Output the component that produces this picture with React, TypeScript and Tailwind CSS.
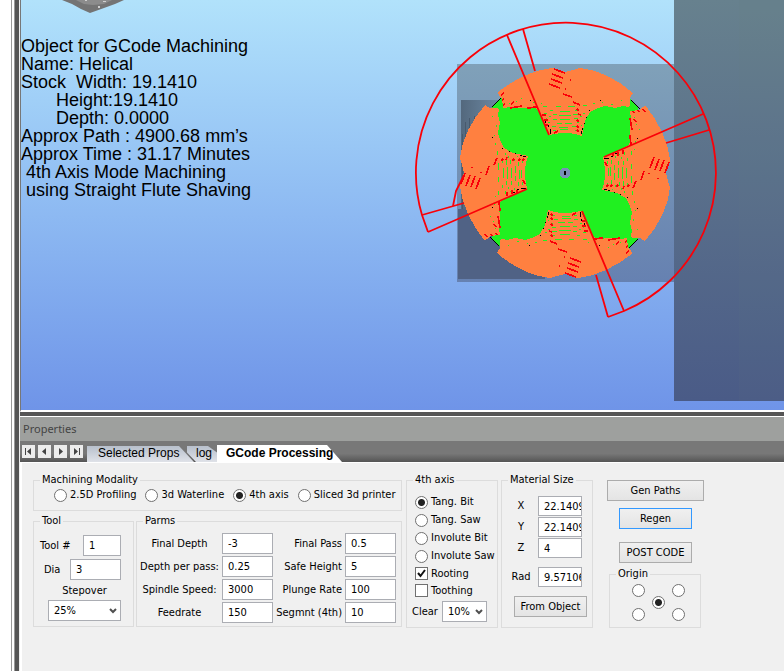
import type { ReactNode } from 'react'

const INFO_LINES = [
  'Object for GCode Machining',
  'Name: Helical',
  'Stock  Width: 19.1410',
  '       Height:19.1410',
  '       Depth: 0.0000',
  'Approx Path : 4900.68 mm’s',
  'Approx Time : 31.17 Minutes',
  ' 4th Axis Mode Machining',
  ' using Straight Flute Shaving',
]

const MODALITIES = ['2.5D Profiling', '3d Waterline', '4th axis', 'Sliced 3d printer']
const AXIS_MODES = ['Tang. Bit', 'Tang. Saw', 'Involute Bit', 'Involute Saw']

const PARMS = [
  ['Final Depth', '-3', 'Final Pass', '0.5'],
  ['Depth per pass:', '0.25', 'Safe Height', '5'],
  ['Spindle Speed:', '3000', 'Plunge Rate', '100'],
  ['Feedrate', '150', 'Segmnt (4th)', '10'],
]

const NAV_ICONS = [
  { label: 'First tab', d: 'M3 3h1v7h-1z M9 3v7l-4-3.500z' },
  { label: 'Previous tab', d: 'M8 3v7l-4-3.500z' },
  { label: 'Next tab', d: 'M5 3v7l4-3.500z' },
  { label: 'Last tab', d: 'M4 3v7l4-3.500z M9 3h1v7h-1z' },
]

// one quarter of the tool path, centred on 0,0 and pointing up
function Petal({ angle }: { angle: number }) {
  return (
    <g transform={`rotate(${angle})`}>
      <path
        fill="#ff8040"
        d="M-67 -81C-50 -94 -32 -103 -13 -105L-9 -104L0 -101L8 -103L15 -105C34 -103 52 -94 68 -80L65 -75V-67L63 -66L58 -67L50 -65L40 -67L33 -65L25 -61L20 -52L17 -37L10 -39Q0 -41 -10 -39L-16 -38L-22 -52L-28 -64L-34 -66L-43 -65L-55 -66L-62 -65L-63 -75L-66 -77Z"
      />
      <path
        stroke="#20f020"
        strokeWidth="1"
        fill="none"
        d="M-22 -66.500h4M-9 -66.500h5M3 -66.500h7M18 -67.500h4M-15 -62.500h3M-5 -61.500h10M10 -62.500h3M-21 -59.500h3M-12 -58.500h4M8 -58.500h5M-16 -56.500h2M-6 -57.500h12M15 -56.500h2M-12 -53.500h4M-5 -53.500h10M9 -54.500h4M-17 -50.500h2M-8 -49.500h5M0 -49.500h7M12 -50.500h2M-13 -46.500h4M-6 -45.500h9M7 -46.500h4M-12 -42.500h3M-5 -43.500h8M10 -42.500h3"
      />
      <path
        stroke="#20f020"
        strokeWidth="1"
        fill="none"
        d="M-56 -69.500h1M-49 -71.500h1M-44 -74.500h1M-32 -70.500h2M-24 -69.500h1M28 -69.500h2M37 -70.500h1M46 -68.500h2M56 -72.500h1M-19 -54.500h1M18 -59.500h2M16 -47.500h1"
      />
      <path
        stroke="#fa0008"
        strokeWidth="1.700"
        fill="none"
        d="M-11 -104L0 -100M-13 -99L-2 -95M-14 -94L-3 -90M-16 -89L-5 -85M0 -84h1M-2 -79L7 -76M5 -93h1M8 -71L15 -68M-55 -65L-43 -67M-38 -65L-28 -66M-64 -78L-61 -80M-63 -73L-61 -74M-62 -68L-60 -69M-54 -69L-51 -71M12 -64L14 -62M13 -59L16 -58M12 -53L14 -51M12 -47L14 -45M12 -43L14 -41M-23 -58h4M-21 -53h4M-20 -48h3M-11 -40L-7 -42"
      />
      <path
        stroke="#000"
        strokeWidth="1"
        fill="none"
        d="M-73 -66L-64 -75M-15 -39L-15 -44M-16.500 -46v-2M-19.500 -50v-2M16.500 -39v-3M17.500 -43v-2M19.500 -49v-1M21.500 -55v-1M24 -62.500h1M-35 -72.500h1M35 -72.500h1"
      />
    </g>
  )
}

function ToolPath() {
  return (
    <svg className="absolute left-0 top-0" width="763" height="410" viewBox="21 0 763 410" aria-hidden="true">
      <defs>
        <linearGradient id="slab" x1="0" y1="0" x2="0" y2="1">
          <stop offset="0" stopColor="#67818e" />
          <stop offset="1" stopColor="#4a5b87" />
        </linearGradient>
        <linearGradient id="stock" x1="0" y1="0" x2="0" y2="1">
          <stop offset="0" stopColor="#80a1b9" />
          <stop offset="1" stopColor="#6681b1" />
        </linearGradient>
        <linearGradient id="side" x1="0" y1="0" x2="1" y2="0">
          <stop offset="0" stopColor="#53687d" />
          <stop offset="1" stopColor="#7492ae" />
        </linearGradient>
      </defs>
      <path fill="#747474" d="M62 0H124L115 4L104 8L90 13L81 9L72 4Z" />
      <path fill="#8c8c8c" d="M76 0H112L104 4L93 5L84 4Z" />
      <path fill="#d0d0d0" d="M85 0h2v1h-2zM98 6h2v2h-2zM103 1h3v1h-3z" />
      <rect x="457" y="64" width="217" height="218" fill="url(#stock)" />
      <rect x="461" y="100" width="50" height="109" fill="url(#side)" />
      <rect x="458" y="209" width="87" height="70" fill="#506285" />
      <path stroke="#485a6e" d="M462.500 134V209M465.500 122V160M469.500 118V150M474.500 116V140" />
      <rect x="674" y="0" width="110" height="401" fill="url(#slab)" />
      <rect x="739" y="0" width="45" height="401" fill="#6b8080" opacity="0.08" />
      <g transform="translate(565 173)" shapeRendering="crispEdges">
        <path fill="#20f020" d="M-73 -66L-64 -75L64 -75L73 -66V66L64 75H-64L-73 66Z" />
        <Petal angle={0} />
        <Petal angle={90} />
        <Petal angle={180} />
        <Petal angle={270} />
        <circle r="5.500" fill="#7890b8" />
        <ellipse rx="1" ry="1.500" fill="none" stroke="#000" />
      </g>
      <g stroke="#fa0008" strokeWidth="1.800" fill="none">
        <path d="M428 232L422 215A150 150 0 1 1 624 311L608 317" />
        <path d="M507 35L549 135M523 29L535 71M604 157L703 114M666 143L709 130M527 189L428 232M422 215L464 203M464 175L456 191L453 206M582 211L624 311M596 275L608 317" />
      </g>
    </svg>
  )
}

function Group({ title, className = '', children }: { title: string; className?: string; children: ReactNode }) {
  return (
    <fieldset className={`min-w-0 border border-[#dcdcdc] ${className}`}>
      <legend className="ml-1.5 h-3.5 px-0.5">{title}</legend>
      {children}
    </fieldset>
  )
}

function Radio({ name, label, checked, hidden }: { name: string; label: string; checked?: boolean; hidden?: boolean }) {
  return (
    <label className="flex items-center gap-[3px] whitespace-nowrap">
      <input
        type="radio"
        name={name}
        aria-label={label}
        defaultChecked={checked}
        className="size-[13px] shrink-0 appearance-none rounded-full border border-[#707070] bg-white checked:bg-[radial-gradient(circle,#222_3px,#fff_4px)]"
      />
      {!hidden && label}
    </label>
  )
}

function Check({ label, checked }: { label: string; checked?: boolean }) {
  return (
    <label className="flex h-[17px] items-center gap-[3px]">
      <span className="grid">
        <input type="checkbox" defaultChecked={checked} className="peer col-start-1 row-start-1 size-[13px] appearance-none border border-[#707070] bg-white" />
        <svg viewBox="0 0 13 13" className="pointer-events-none invisible col-start-1 row-start-1 size-[13px] peer-checked:visible" fill="none" stroke="#111" strokeWidth="2">
          <path d="M3 6L5.500 9L10 3" />
        </svg>
      </span>
      {label}
    </label>
  )
}

function Field({ id, value, className = 'h-[21px]' }: { id: string; value: string; className?: string }) {
  return <input id={id} type="text" defaultValue={value} className={`min-w-0 border border-[#abadb3] bg-white pl-[5px] ${className}`} />
}

function Dropdown({ id, value, className = '' }: { id: string; value: string; className?: string }) {
  return (
    <span className={`grid items-center ${className}`}>
      <select id={id} className="col-start-1 row-start-1 h-[21px] w-full appearance-none border border-[#abadb3] bg-white pl-[5px]">
        <option>{value}</option>
      </select>
      <svg viewBox="0 0 8 6" className="pointer-events-none col-start-1 row-start-1 mr-1 h-1.5 w-2 justify-self-end" fill="none" stroke="#505050" strokeWidth="2">
        <path d="M1 1L4 4L7 1" />
      </svg>
    </span>
  )
}

function PushButton({ children, className = '' }: { children: ReactNode; className?: string }) {
  return (
    <button type="button" className={`h-[21px] border bg-linear-to-b from-[#f0f0f0] to-[#e4e4e4] ${className}`}>
      {children}
    </button>
  )
}

function Viewport() {
  return (
    <div className="relative h-[410px] overflow-hidden bg-linear-to-b from-[#b1e2fb] to-[#6f94e8]">
      <ToolPath />
      <div className="relative pt-[37px] font-['Liberation_Sans',sans-serif] text-[18px] leading-[18px] text-black">
        {INFO_LINES.map(line => (
          <p key={line} className="whitespace-pre">{line}</p>
        ))}
      </div>
    </div>
  )
}

function TabBar() {
  return (
    <div className="flex h-[21px] items-end bg-linear-to-b from-[#787878] from-60% to-[#555] pl-0.5 font-['Liberation_Sans',sans-serif] text-xs text-black">
      <div className="mb-1 flex gap-[3px]">
        {NAV_ICONS.map(icon => (
          <button key={icon.label} type="button" aria-label={icon.label} className="size-[13px] bg-[#ececec]">
            <svg viewBox="0 0 13 13" fill="#444"><path d={icon.d} /></svg>
          </button>
        ))}
      </div>
      <div className="ml-1 flex h-[17px] items-end leading-[14px]">
        <button type="button" className="h-4 w-[107px] bg-linear-to-b from-[#b8c0cc] to-[#dfe2e8] pb-0.5 pl-[11px] text-left [clip-path:polygon(0_0,86%_0,100%_100%,0_100%)]">Selected Props</button>
        <button type="button" className="-ml-[7px] h-4 w-[30px] bg-linear-to-b from-[#b8c0cc] to-[#dfe2e8] pb-0.5 pl-[9px] text-left [clip-path:polygon(0_0,70%_0,100%_40%,100%_100%,30%_100%,0_40%)]">log</button>
        <button type="button" className="h-[17px] w-[125px] bg-white pb-0.5 pl-[9px] text-left font-bold [clip-path:polygon(0_0,88%_0,100%_100%,0_100%)]">GCode Processing</button>
      </div>
    </div>
  )
}

function ToolGroup() {
  return (
    <Group title="Tool" className="w-[101px]">
      <div className="flex flex-col pr-3 pt-[7px]">
        <div className="flex items-center justify-between pl-1.5">
          <label htmlFor="tool-no">Tool #</label>
          <Field id="tool-no" value="1" className="h-[21px] w-[38px]" />
        </div>
        <div className="mt-[3px] flex items-center justify-between pl-2.5">
          <label htmlFor="dia">Dia</label>
          <Field id="dia" value="3" className="h-[21px] w-[51px]" />
        </div>
        <label htmlFor="stepover" className="mt-1 pl-3.5 text-center">Stepover</label>
        <Dropdown id="stepover" value="25%" className="ml-3.5 mt-0.5" />
      </div>
    </Group>
  )
}

function ParmsGroup() {
  return (
    <Group title="Parms" className="flex-1">
      <div className="grid grid-cols-[85px_51px_72px_51px] items-center gap-y-0.5 pt-[5px]">
        {PARMS.map(([leftLabel, leftValue, rightLabel, rightValue]) => (
          <div key={leftLabel} className="contents">
            <label htmlFor={leftLabel} className="whitespace-nowrap text-center">{leftLabel}</label>
            <Field id={leftLabel} value={leftValue} />
            <label htmlFor={rightLabel} className="whitespace-nowrap pr-[3px] text-right">{rightLabel}</label>
            <Field id={rightLabel} value={rightValue} />
          </div>
        ))}
      </div>
    </Group>
  )
}

function MaterialGroup() {
  const rows = [['X', '22.14095'], ['Y', '22.14095'], ['Z', '4'], ['Rad', '9.57106']]
  return (
    <Group title="Material Size" className="ml-[3px] w-[92px]">
      <div className="flex flex-col items-end gap-[1px] pr-2.5 pt-[9px]">
        {rows.map(([label, value]) => (
          <div key={label} className="flex items-center last-of-type:mt-2">
            <label htmlFor={label} className="w-[34px] text-center">{label}</label>
            <Field id={label} value={value} className="h-5 w-[44px]" />
          </div>
        ))}
      </div>
      <PushButton className="ml-3 mt-[9px] w-[73px] border-[#acacac]">From Object</PushButton>
    </Group>
  )
}

function AxisGroup() {
  return (
    <Group title="4th axis" className="ml-1 w-[92px]">
      <div className="pl-2 pt-1.5">
        {AXIS_MODES.map(mode => (
          <div key={mode} className="flex h-[18px] items-center">
            <Radio name="axis" label={mode} checked={mode === 'Tang. Bit'} />
          </div>
        ))}
        <Check label="Rooting" checked />
        <Check label="Toothing" />
      </div>
      <div className="mt-0.5 flex items-center gap-1 pl-[5px]">
        <label htmlFor="clear">Clear</label>
        <Dropdown id="clear" value="10%" className="w-[45px]" />
      </div>
    </Group>
  )
}

function OriginGroup() {
  return (
    <Group title="Origin" className="ml-0.5 mt-1 w-[92px] self-start">
      <div className="grid grid-cols-3 grid-rows-[12px_12px_13px] place-items-center pb-1.5 pl-[19px] pr-3 pt-[3px]">
        <Radio name="origin" label="Top left" hidden />
        <span className="col-start-3"><Radio name="origin" label="Top right" hidden /></span>
        <span className="col-start-2 row-start-2"><Radio name="origin" label="Center" checked hidden /></span>
        <span className="col-start-1 row-start-3"><Radio name="origin" label="Bottom left" hidden /></span>
        <span className="col-start-3 row-start-3"><Radio name="origin" label="Bottom right" hidden /></span>
      </div>
    </Group>
  )
}

export default function App() {
  return (
    <div className="flex min-h-screen bg-white">
      <div className="flex w-[19px] shrink-0 justify-end">
        <div className="w-1 border-x border-[#999] bg-white" />
        <div className="w-1 bg-[#555]" />
      </div>
      <main className="flex min-w-0 flex-1 flex-col border-l border-[#eee]">
        <div className="border-b-2 border-l border-b-white border-l-[#777]">
          <Viewport />
        </div>
        <div className="h-1 bg-[#555]" />
        <h2 className="h-[25px] border-t border-white bg-[#9ea09e] pl-[3px] font-['Noto_Sans',sans-serif] text-[11px] leading-[23px] text-[#444]">Properties</h2>
        <TabBar />
        <form className="flex flex-1 items-start border-l-2 border-t border-white bg-[#f0f0f0] pl-[11px] pt-2.5 font-['DejaVu_Sans_Condensed','DejaVu_Sans',sans-serif] text-[11px] leading-[14px] text-black">
          <div className="flex items-stretch">
            <div className="flex w-[369px] flex-col gap-[3px]">
              <Group title="Machining Modality">
                <div className="flex h-[23px] items-start gap-[9px] pl-5 pt-[1px]">
                  {MODALITIES.map(mode => (
                    <Radio key={mode} name="modality" label={mode} checked={mode === '4th axis'} />
                  ))}
                </div>
              </Group>
              <div className="flex h-[113px] gap-0.5">
                <ToolGroup />
                <ParmsGroup />
              </div>
            </div>
            <AxisGroup />
            <MaterialGroup />
            <div className="ml-3.5 flex w-[97px] flex-col items-center pt-[7px]">
              <PushButton className="w-full border-[#acacac]">Gen Paths</PushButton>
              <PushButton className="mt-[7px] w-[73px] border-[#3399ff]">Regen</PushButton>
              <PushButton className="mt-[13px] w-[73px] border-[#acacac]">POST CODE</PushButton>
              <OriginGroup />
            </div>
          </div>
        </form>
      </main>
    </div>
  )
}
